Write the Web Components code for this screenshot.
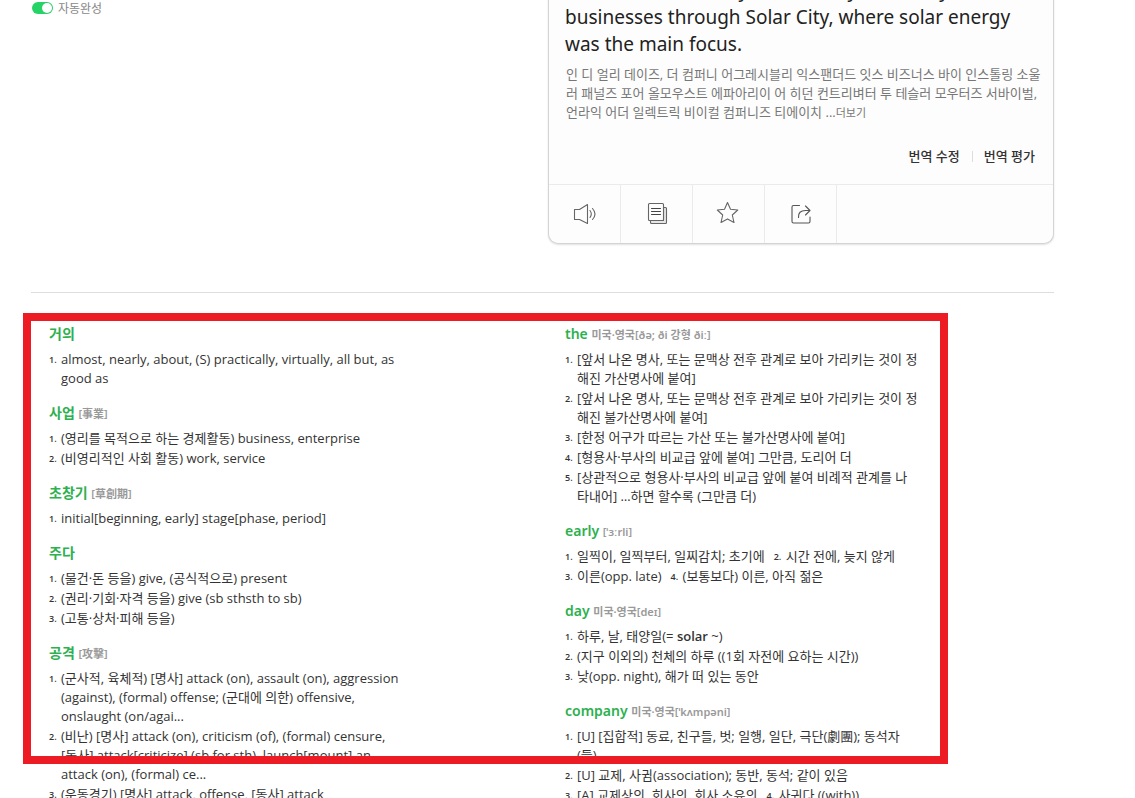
<!DOCTYPE html>
<html lang="ko">
<head>
<meta charset="utf-8">
<title>번역</title>
<style>
html { scrollbar-width: none; background: #fff; }
body { margin: 0; color: #333; font: 13px/19px "Open Sans", "Noto Sans", "Noto Sans CJK KR", sans-serif; }
</style>
</head>
<body>
<translator-page>
  <auto-switch slot="source">자동완성</auto-switch>
  <result-card slot="result">
    <span>It also traded mostly additionally monetary solar<br>businesses through Solar City, where solar energy<br>was the main focus.</span>
    <span slot="reading">인 디 얼리 데이즈, 더 컴퍼니 어그레시블리 익스팬더드 잇스 비즈너스 바이 인스톨링 소울<br>러 패널즈 포어 올모우스트 에파아리이 어 히던 컨트리벼터 투 테슬러 모우터즈 서바이벌,<br>언라익 어더 일렉트릭 비이컬 컴퍼니즈 티에이치 ...</span>
  </result-card>
  <word-column slot="words">
    <word-entry word="거의">
      <word-sense n="1">almost, nearly, about, (S) practically, virtually, all but, as<br>good as</word-sense>
    </word-entry>
    <word-entry word="사업" note="[事業]">
      <word-sense n="1">(영리를 목적으로 하는 경제활동) business, enterprise</word-sense>
      <word-sense n="2">(비영리적인 사회 활동) work, service</word-sense>
    </word-entry>
    <word-entry word="초창기" note="[草創期]">
      <word-sense n="1">initial[beginning, early] stage[phase, period]</word-sense>
    </word-entry>
    <word-entry word="주다">
      <word-sense n="1">(물건·돈 등을) give, (공식적으로) present</word-sense>
      <word-sense n="2">(권리·기회·자격 등을) give (sb sthsth to sb)</word-sense>
      <word-sense n="3">(고통·상처·피해 등을)</word-sense>
    </word-entry>
    <word-entry word="공격" note="[攻擊]">
      <word-sense n="1">(군사적, 육체적) [명사] attack (on), assault (on), aggression<br>(against), (formal) offense; (군대에 의한) offensive,<br>onslaught (on/agai...</word-sense>
      <word-sense n="2">(비난) [명사] attack (on), criticism (of), (formal) censure,<br>[동사] attack[criticize] (sb for sth), launch[mount] an<br>attack (on), (formal) ce...</word-sense>
      <word-sense n="3">(운동경기) [명사] attack, offense, [동사] attack</word-sense>
    </word-entry>
  </word-column>
  <word-column slot="words">
    <word-entry word="the" note="미국·영국[ðə; ði 강형 ðiː]">
      <word-sense n="1">[앞서 나온 명사, 또는 문맥상 전후 관계로 보아 가리키는 것이 정<br>해진 가산명사에 붙여]</word-sense>
      <word-sense n="2">[앞서 나온 명사, 또는 문맥상 전후 관계로 보아 가리키는 것이 정<br>해진 불가산명사에 붙여]</word-sense>
      <word-sense n="3">[한정 어구가 따르는 가산 또는 불가산명사에 붙여]</word-sense>
      <word-sense n="4">[형용사·부사의 비교급 앞에 붙여] 그만큼, 도리어 더</word-sense>
      <word-sense n="5">[상관적으로 형용사·부사의 비교급 앞에 붙여 비례적 관계를 나<br>타내어] …하면 할수록 (그만큼 더)</word-sense>
    </word-entry>
    <word-entry word="early" note="[ˈɜːrli]">
      <word-sense n="1">일찍이, 일찍부터, 일찌감치; 초기에</word-sense>
      <word-sense n="2">시간 전에, 늦지 않게</word-sense>
      <word-sense n="3">이른(opp. late)</word-sense>
      <word-sense n="4">(보통보다) 이른, 아직 젊은</word-sense>
    </word-entry>
    <word-entry word="day" note="미국·영국[deɪ]">
      <word-sense n="1">하루, 날, 태양일(= <b style="font-weight:600">solar</b> ~)</word-sense>
      <word-sense n="2">(지구 이외의) 천체의 하루 ((1회 자전에 요하는 시간))</word-sense>
      <word-sense n="3">낮(opp. night), 해가 떠 있는 동안</word-sense>
    </word-entry>
    <word-entry word="company" note="미국·영국[ˈkʌmpəni]">
      <word-sense n="1">[U] [집합적] 동료, 친구들, 벗; 일행, 일단, 극단(劇團); 동석자<br>(들)</word-sense>
      <word-sense n="2">[U] 교제, 사귐(association); 동반, 동석; 같이 있음</word-sense>
      <word-sense n="3">[A] 교제상의, 회사의, 회사 소유의</word-sense>
      <word-sense n="4">사귀다 ((with))</word-sense>
    </word-entry>
  </word-column>
</translator-page>

<script>
class Base extends HTMLElement {
  connectedCallback() {
    if (this.shadowRoot) return;
    this.attachShadow({ mode: "open" }).innerHTML = this.render();
  }
}

customElements.define("translator-page", class extends Base {
  render() {
    return `<style>
      :host { display: block; margin: -24px 81px 0 31px; }
      .top { display: grid; grid-template-columns: 1fr 1fr; gap: 11px; align-items: start; padding-bottom: 48px; border-bottom: 1px solid #ddd; }
      .source { padding-top: 22px; }
      .words { position: relative; display: grid; grid-template-columns: 1fr 1fr; column-gap: 27px; padding: 31px 0 0 18px; }
      .frame { position: absolute; top: 20px; left: -8px; right: 106px; height: 451px; box-sizing: border-box; border: 8px solid #ed1c24; pointer-events: none; }
    </style>
    <main>
      <div class="top"><div class="source"><slot name="source"></slot></div><slot name="result"></slot></div>
      <section class="words"><slot name="words"></slot><div class="frame"></div></section>
    </main>`;
  }
});

customElements.define("auto-switch", class extends Base {
  render() {
    return `<style>
      :host { display: block; }
      label { display: inline-flex; align-items: center; gap: 5px; font: 12px/20px "Noto Sans CJK KR", sans-serif; color: #888; }
      input { appearance: none; margin: 0 0 0 1px; width: 21px; height: 12px; border-radius: 6px; background: #25d366; display: flex; justify-content: flex-end; padding: 1px; box-sizing: border-box; }
      input::before { content: ""; width: 10px; height: 10px; border-radius: 50%; background: #fff; }
      input:not(:checked) { justify-content: flex-start; background: #bbb; }
    </style>
    <label><input type="checkbox" role="switch" checked><slot></slot></label>`;
  }
});

customElements.define("result-card", class extends Base {
  render() {
    return `<style>
      :host { display: block; box-sizing: border-box; background: #fdfdfd; border: 1px solid #d4d4d4; border-top: 0; border-radius: 0 0 10px 10px; box-shadow: 0 1px 2px rgba(0,0,0,.12); overflow: hidden; }
      p { margin: 0; white-space: nowrap; }
      .text { padding: 1px 16px 0; font: 19px/27px "Noto Sans", sans-serif; color: #222; }
      .reading { padding: 7px 17px 0; color: #777; }
      .reading a { font-size: 11px; color: inherit; text-decoration: none; }
      .links { display: flex; justify-content: flex-end; align-items: center; gap: 12px; padding: 24px 18px 18px 0; }
      .links a { color: #333; font-weight: 500; text-decoration: none; line-height: 20px; }
      .links i { width: 1px; height: 11px; margin-right: -1px; background: #ddd; }
      .tools { display: flex; border-top: 1px solid #ebebeb; }
      button { width: 72px; height: 58px; padding: 0; border: 0; border-right: 1px solid #ebebeb; background: none; display: grid; place-items: center; }
      svg { width: 26px; height: 26px; fill: none; stroke: #666; stroke-width: 1.1; stroke-linejoin: round; stroke-linecap: round; }
    </style>
    <p class="text"><slot></slot></p>
    <p class="reading"><slot name="reading"></slot><a href="#">더보기</a></p>
    <nav class="links"><a href="#">번역 수정</a><i></i><a href="#">번역 평가</a></nav>
    <div class="tools">
      <button aria-label="듣기"><svg viewBox="0 0 26 26"><path d="M2.5 8.500h5L15.500 3.500v19L7.500 18.500h-5z"/><path d="M18 9.500q2.600 3.500 0 7M20.500 7.500q5 5.500 0 11"/></svg></button>
      <button aria-label="사전"><svg viewBox="0 0 26 26"><path fill="#e6e6e6" d="M19.500 6.500h2q1 0 1 1v14q0 1-1 1h-14q-1 0-1-1v-2h13z"/><rect fill="#fdfdfd" x="4.500" y="2.500" width="15" height="17" rx="1"/><path stroke="#444" d="M7.500 7.500h9M7.500 10.500h9M7.500 13.500h9"/></svg></button>
      <button aria-label="즐겨찾기"><svg viewBox="0 0 26 26"><path d="M11.500 1.500l3 6.800 7.300.7-5.500 5 1.700 7.500-6.500-3.600L5 21.500 6.700 14 1.300 9l7.200-.7z"/></svg></button>
      <button aria-label="공유"><svg viewBox="0 0 26 26"><path stroke="#555" d="M11.500 4.500h-6q-1.500 0-1.500 1.500v14.500q0 1.500 1.500 1.500h15q1.500 0 1.500-1.500v-4.500M10.500 16.500q-.5-7 7-7h4M17.500 5l4.500 4.500-4.500 4.500"/></svg></button>
    </div>`;
  }
});

customElements.define("word-column", class extends Base {
  render() {
    return `<style>:host { display: grid; gap: 14px; align-content: start; }</style><slot></slot>`;
  }
});

customElements.define("word-entry", class extends Base {
  render() {
    return `<style>
      :host { display: block; max-width: 360px; }
      h3 { margin: 0 0 6px; font: 600 14px/20px "Noto Sans", "Noto Sans CJK KR", sans-serif; height: 20px; color: #2db04f; white-space: nowrap; }
      small { font-size: 11px; font-weight: 600; color: #999; }
      .senses { display: flex; flex-wrap: wrap; column-gap: 9px; }
    </style>
    <h3>${this.getAttribute("word")}${this.hasAttribute("note") ? ` <small>${this.getAttribute("note")}</small>` : ""}</h3>
    <div class="senses" role="list"><slot></slot></div>`;
  }
});

customElements.define("word-sense", class extends Base {
  render() {
    this.setAttribute("role", "listitem");
    return `<style>
      :host { display: flex; padding-bottom: 1px; white-space: nowrap; }
      .n { flex: none; width: 12px; font-size: 9px; font-weight: 600; }
    </style>
    <span class="n">${this.getAttribute("n")}.</span><div><slot></slot></div>`;
  }
});
</script>
</body>
</html>
